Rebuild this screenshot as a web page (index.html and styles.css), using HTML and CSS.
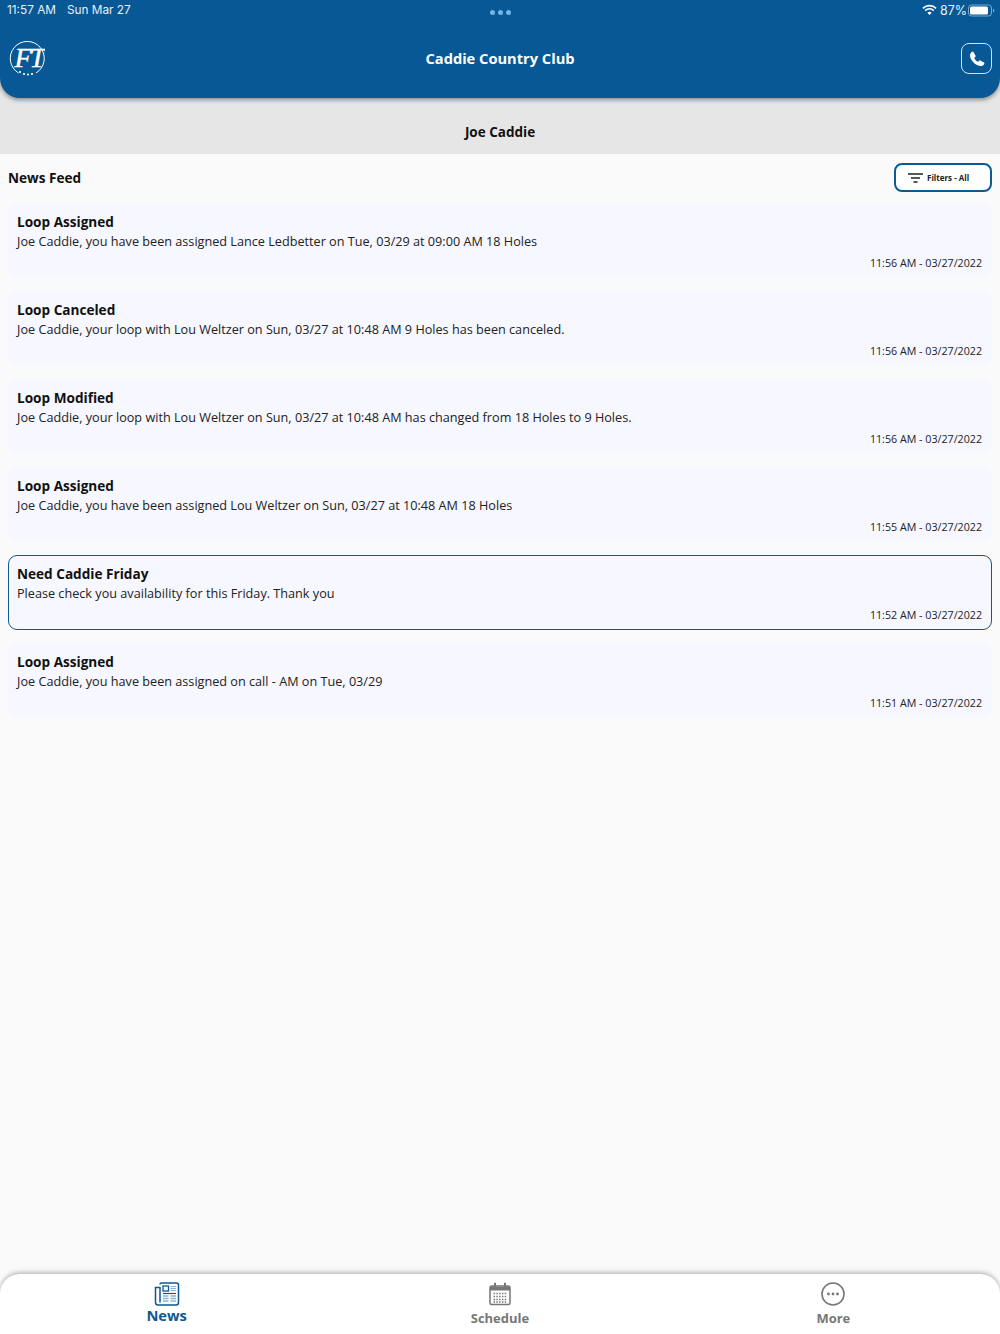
FILE: index.html
```html
<!DOCTYPE html>
<html lang="en">
<head>
<meta charset="UTF-8">
<meta name="viewport" content="width=device-width, initial-scale=1.0">
<title>Caddie Country Club</title>
<link rel="stylesheet" href="styles.css">
</head>
<body>
<div class="app">
    <header class="top-bar">
        <div class="status-bar">
            <div class="status-left"><span>11:57 AM</span><span>Sun Mar 27</span></div>
            <div class="status-dots"><i></i><i></i><i></i></div>
            <div class="status-right">
                <svg class="wifi-icon" width="15" height="12" viewBox="0 0 16 12">
                    <path d="M1 4.2a10 10 0 0 1 14 0" fill="none" stroke="#fff" stroke-width="1.7"/>
                    <path d="M3.4 6.6a6.6 6.6 0 0 1 9.2 0" fill="none" stroke="#fff" stroke-width="1.7"/>
                    <path d="M5.7 8.9a3.3 3.3 0 0 1 4.6 0L8 11.4z" fill="#fff"/>
                </svg>
                <span>87%</span>
                <svg class="battery-icon" width="27" height="13" viewBox="0 0 27 13">
                    <rect x="0.5" y="1" width="23" height="11" rx="3" fill="none" stroke="#7fa8c9"/>
                    <rect x="2" y="2.5" width="18" height="8" rx="1.6" fill="#fff"/>
                    <path d="M25 4.8c1 .3 1.4 1 1.4 1.7s-.4 1.4-1.4 1.7z" fill="#7fa8c9"/>
                </svg>
            </div>
        </div>
        <div class="title-row">
            <svg class="logo" width="36" height="36" viewBox="0 0 36 36">
                <path d="M9.500 32A17 17 0 1 1 27 32" fill="none" stroke="#fff" stroke-width="1"/>
                <text x="5.500" y="26" class="logo-text">FT</text>
                <circle cx="11" cy="31" r="1.1" fill="#fff"/>
                <circle cx="15" cy="33" r="1.1" fill="#fff"/>
                <circle cx="19" cy="33.5" r="1.1" fill="#fff"/>
                <circle cx="23" cy="33" r="1.1" fill="#fff"/>
            </svg>
            <h1>Caddie Country Club</h1>
            <a href="#" class="call-btn">
                <svg width="16" height="16" viewBox="0 0 24 24">
                    <path fill="#fff" d="M6.6 1.5 9.9 7c.3.5.2 1.1-.2 1.5L7.8 10.4c1.2 2.600 3.200 4.600 5.800 5.800l1.900-1.900c.4-.4 1-.5 1.500-.2l5.500 3.300c.6.300.8 1 .5 1.600-1 2.100-3 3.500-5.300 3.500C10.200 22.500 1.500 13.800 1.500 6.300 1.500 4 2.900 2 5 1c.6-.3 1.300-.1 1.600.5z"/>
                </svg>
            </a>
        </div>
    </header>

    <div class="user-bar">Joe Caddie</div>

    <main class="feed">
        <div class="feed-head">
            <h2>News Feed</h2>
            <a href="#" class="filter-btn">
                <svg width="15" height="10" viewBox="0 0 15 10">
                    <path d="M0 1h15M3 5h9M5.500 9h4" fill="none" stroke="#222" stroke-width="1.300"/>
                </svg>
                Filters - All
            </a>
        </div>

        <div class="news-list">
            <div class="news-card">
                <h3>Loop Assigned</h3>
                <p>Joe Caddie, you have been assigned Lance Ledbetter on Tue, 03/29 at 09:00 AM 18 Holes</p>
                <time>11:56 AM - 03/27/2022</time>
            </div>
            <div class="news-card">
                <h3>Loop Canceled</h3>
                <p>Joe Caddie, your loop with Lou Weltzer on Sun, 03/27 at 10:48 AM 9 Holes has been canceled.</p>
                <time>11:56 AM - 03/27/2022</time>
            </div>
            <div class="news-card">
                <h3>Loop Modified</h3>
                <p>Joe Caddie, your loop with Lou Weltzer on Sun, 03/27 at 10:48 AM has changed from 18 Holes to 9 Holes.</p>
                <time>11:56 AM - 03/27/2022</time>
            </div>
            <div class="news-card">
                <h3>Loop Assigned</h3>
                <p>Joe Caddie, you have been assigned Lou Weltzer on Sun, 03/27 at 10:48 AM 18 Holes</p>
                <time>11:55 AM - 03/27/2022</time>
            </div>
            <div class="news-card unread">
                <h3>Need Caddie Friday</h3>
                <p>Please check you availability for this Friday. Thank you</p>
                <time>11:52 AM - 03/27/2022</time>
            </div>
            <div class="news-card">
                <h3>Loop Assigned</h3>
                <p>Joe Caddie, you have been assigned on call - AM on Tue, 03/29</p>
                <time>11:51 AM - 03/27/2022</time>
            </div>
        </div>
    </main>

    <nav class="tab-bar">
        <a href="#" class="tab active">
            <svg width="26" height="26" viewBox="0 0 26 26">
                <path d="M6 3.500a1.500 1.500 0 0 1 1.500-1.500h15a2 2 0 0 1 2 2v17.500a2.500 2.500 0 0 1-2.500 2.500H4a2.500 2.500 0 0 1-2.500-2.500V6.500H6" fill="none" stroke="#0a5a96" stroke-width="1.500"/>
                <path d="M6 6v15.500" fill="none" stroke="#0a5a96" stroke-width="1.500"/>
                <rect x="9" y="5" width="5.500" height="5" fill="none" stroke="#0a5a96" stroke-width="1.300"/>
                <path d="M16.500 5.500h5.500M16.500 7.500h5.500M16.500 9.500h5.500" stroke="#8fb4d2" stroke-width="1.200"/>
                <path d="M9 12.500h13" stroke="#0a5a96" stroke-width="1.200"/>
                <path d="M9 15h5.500M9 17.500h5.500M9 20h5.500M16.500 15h5.500M16.500 17.500h5.500M16.500 20h5.500" stroke="#8fb4d2" stroke-width="1.400"/>
            </svg>
            <span>News</span>
        </a>
        <a href="#" class="tab">
            <svg width="24" height="24" viewBox="0 0 24 24">
                <rect x="2" y="4" width="20" height="18.500" rx="1.500" fill="none" stroke="#777" stroke-width="1.500"/>
                <path d="M2 4.500h20v4H2z" fill="#777"/>
                <path d="M7 1.500v4.500M17 1.500v4.500" stroke="#777" stroke-width="2" stroke-linecap="round"/>
                <path d="M5.500 11.500h13M5.500 14.500h13M5.500 17.500h13M5.500 20h13" stroke="#777" stroke-width="1.400" stroke-dasharray="1.500 1.300"/>
            </svg>
            <span>Schedule</span>
        </a>
        <a href="#" class="tab">
            <svg width="24" height="24" viewBox="0 0 24 24">
                <circle cx="12" cy="12" r="11" fill="none" stroke="#777" stroke-width="1.600"/>
                <circle cx="7.500" cy="12" r="1.400" fill="#777"/>
                <circle cx="12" cy="12" r="1.400" fill="#777"/>
                <circle cx="16.500" cy="12" r="1.400" fill="#777"/>
            </svg>
            <span>More</span>
        </a>
    </nav>
</div>
</body>
</html>
```

FILE: styles.css
```css
* {
    box-sizing: border-box;
}
html, body {
    margin: 0;
    padding: 0;
}
body {
    font-family: "Open Sans", Arial, sans-serif;
    background-color: #fafafa;
    color: #111;
}
a {
    text-decoration: none;
}
.app {
    display: flex;
    flex-direction: column;
    height: 1334px;
    overflow: hidden;
}

/* Header */
.top-bar {
    position: relative;
    z-index: 2;
    height: 98px;
    flex-shrink: 0;
    background-color: #075895;
    border-radius: 0 0 20px 20px;
    box-shadow: 0 2px 4px rgba(0, 0, 0, 0.4);
    color: #fff;
}
.status-bar {
    display: grid;
    grid-template-columns: 1fr auto 1fr;
    align-items: center;
    height: 20px;
    padding: 0 5px;
    font-family: Inter, Roboto, sans-serif;
    font-size: 11.800px;
    color: #e8f0f6;
}
.status-left {
    display: flex;
    gap: 11px;
    padding-left: 2px;
}
.status-dots {
    display: flex;
    gap: 3px;
    padding-top: 5px;
}
.status-dots i {
    width: 5px;
    height: 5px;
    border-radius: 50%;
    background-color: #74b6ea;
}
.status-right {
    display: flex;
    align-items: center;
    justify-content: flex-end;
    gap: 1px;
    font-size: 12.500px;
}
.wifi-icon {
    margin-right: 2px;
}
.title-row {
    display: grid;
    grid-template-columns: 1fr auto 1fr;
    align-items: center;
    height: 77px;
    padding: 0 8px;
}
.title-row h1 {
    margin: 0;
    padding-bottom: 2px;
    font-size: 14.650px;
    font-weight: 700;
}
.logo {
    margin-left: 1px;
}
.logo-text {
    font-family: "Liberation Serif", serif;
    font-style: italic;
    font-size: 28px;
    letter-spacing: -2px;
    stroke: #fff;
    stroke-width: 0.4px;
    fill: #fff;
}
.call-btn {
    display: flex;
    align-items: center;
    justify-content: center;
    justify-self: end;
    width: 31px;
    height: 31px;
    border: 1px solid #d5e3ee;
    border-radius: 8px;
}

/* Name strip */
.user-bar {
    flex-shrink: 0;
    height: 76px;
    margin-top: -20px;
    padding-top: 38px;
    background-color: #e6e6e6;
    font-size: 13.500px;
    font-weight: 700;
    line-height: 32px;
    text-align: center;
}

/* Feed */
.feed {
    flex: 1;
    padding: 0 8px;
}
.feed-head {
    display: flex;
    align-items: center;
    justify-content: space-between;
    height: 47px;
    margin-bottom: 2px;
}
.feed-head h2 {
    margin: 0;
    font-size: 13.600px;
    font-weight: 700;
}
.filter-btn {
    display: flex;
    align-items: center;
    gap: 4px;
    width: 98px;
    height: 29px;
    padding-left: 12px;
    border: 2px solid #0a5a96;
    border-radius: 8px;
    background-color: #fff;
    color: #222;
    font-size: 8px;
    font-weight: 700;
}
.news-list {
    display: flex;
    flex-direction: column;
    gap: 13px;
}
.news-card {
    display: flex;
    flex-direction: column;
    height: 75px;
    padding: 8px 9px 7px 8px;
    background-color: #f6f7ff;
    border: 1px solid transparent;
    border-radius: 9px;
}
.news-card.unread {
    border-color: #0a5a96;
}
.news-card h3 {
    margin: 0;
    font-size: 13.600px;
    font-weight: 700;
    line-height: 19px;
}
.news-card p {
    margin: 1px 0 0;
    font-size: 12.670px;
    line-height: 19px;
    color: #222;
}
.news-card time {
    margin-top: auto;
    font-size: 10.700px;
    line-height: 14px;
    text-align: right;
    color: #222;
}

/* Tabs */
.tab-bar {
    display: grid;
    grid-template-columns: repeat(3, 1fr);
    flex-shrink: 0;
    height: 60px;
    background-color: #fff;
    border-radius: 20px 20px 0 0;
    box-shadow: 0 -2px 4px rgba(0, 0, 0, 0.25);
}
.tab {
    display: flex;
    flex-direction: column;
    align-items: center;
    padding-top: 8px;
    color: #777;
    font-size: 13px;
    font-weight: 700;
    line-height: 18px;
}
.tab span {
    margin-top: 3px;
}
.tab.active {
    padding-top: 7px;
    color: #0a5a96;
    font-size: 14.700px;
}
.tab.active span {
    margin-top: -1px;
}
```
